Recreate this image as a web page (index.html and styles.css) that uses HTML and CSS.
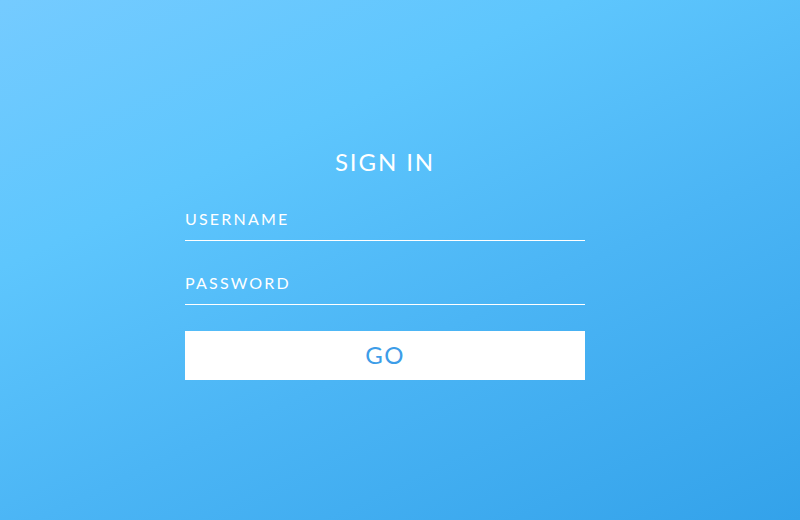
FILE: index.html
```html
<!DOCTYPE html>
<html>
<head>
<meta charset="utf-8">
<link rel="stylesheet" href="styles.css">
</head>
<body>
<main class="page">
  <form class="login">
    <h1 class="title">SIGN IN</h1>
    <input class="field" type="text" placeholder="USERNAME">
    <input class="field" type="password" placeholder="PASSWORD">
    <button class="go" type="button">GO</button>
  </form>
</main>
</body>
</html>
```
FILE: styles.css
```css
html, body {
  margin: 0;
  height: 100%;
}
body {
  background: linear-gradient(155deg, #75cbff 0%, #5ec6fd 30%, #4bb5f5 60%, #33a2ea 100%);
  font-family: Lato, "Open Sans", sans-serif;
}
.page {
  display: flex;
  justify-content: center;
  padding-top: 147px;
  padding-right: 30px;
}
.login {
  width: 400px;
  display: flex;
  flex-direction: column;
}
.title {
  margin: 0 0 24px;
  height: 30px;
  line-height: 30px;
  text-align: center;
  color: #fff;
  font-size: 24px;
  font-weight: 400;
  letter-spacing: 1.9px;
}
.field {
  box-sizing: border-box;
  height: 40px;
  margin: 0 0 24px;
  padding: 0 0 4px;
  border: none;
  border-bottom: 1px solid #fff;
  background: transparent;
  color: #fff;
  font-family: inherit;
  font-size: 16px;
  letter-spacing: 2.2px;
  outline: none;
}
.field::placeholder {
  color: #fff;
  opacity: 1;
}
.field + .field {
  margin-bottom: 26px;
}
.go {
  height: 49px;
  border: none;
  background: #fff;
  color: #3d9de8;
  font-family: inherit;
  font-size: 24px;
  letter-spacing: 1.5px;
  padding: 0 0 2px;
}
```
